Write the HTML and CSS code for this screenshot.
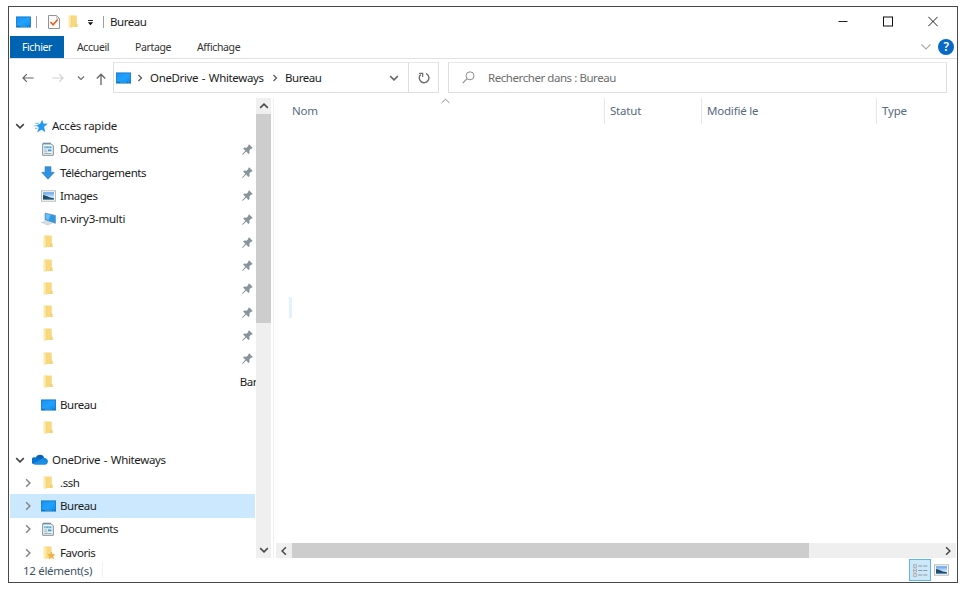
FILE: index.html
```html
<!DOCTYPE html>
<html lang="fr">
<head>
  <meta charset="UTF-8" />
  <title>Bureau</title>
  <link rel="stylesheet" href="styles.css">
</head>
<body>
  <svg class="sprite" aria-hidden="true">
    <defs>
      <linearGradient id="blueScreen" x1="0" y1="0" x2="1" y2="1">
        <stop offset="0" stop-color="#1590f5" />
        <stop offset="0.5" stop-color="#22a2ff" />
        <stop offset="1" stop-color="#0b8cf0" />
      </linearGradient>
      <linearGradient id="photoSky" x1="0" y1="0" x2="0" y2="1">
        <stop offset="0" stop-color="#5b9fea" />
        <stop offset="0.7" stop-color="#d8ecfb" />
      </linearGradient>
    </defs>
    <symbol id="desktop" viewBox="0 0 15 12">
      <rect x="0.4" y="0.9" width="14.2" height="10.2" fill="url(#blueScreen)" stroke="#1373bd" stroke-width="0.8" />
      <path d="M1 9.8h13v1H1z" fill="#096ab5" />
      <path d="M4 10.3h7M12 10.3h1" stroke="#55bdfb" stroke-width="0.6" />
    </symbol>
    <symbol id="folder" viewBox="0 0 10 14">
      <path d="M1 0.5h7.8v8l0.7 1v2.6H1z" fill="#f8d982" />
      <path d="M8.8 8.4l0.7 1.1v2.6H7V9z" fill="#f4d274" />
      <path d="M0.5 0.7l2.6 1v11.6L0.5 12.2z" fill="#fdeaa9" />
      <path d="M3.3 2v10.4" stroke="#efcf72" stroke-width="0.6" />
    </symbol>
    <symbol id="doc" viewBox="0 0 12 14">
      <path d="M0.7 1.7h8l2.6 2v9.6H0.7z" fill="#f6f9fb" stroke="#7f8b93" stroke-width="1" />
      <path d="M2 0.5v2M4 0.5v2M6 0.5v2M8 0.5v2" stroke="#4c7fa2" stroke-width="1" />
      <path d="M2.2 4.3h7.3v2H2.2z" fill="#57a8d6" />
      <path d="M4 4.3v2M7 4.3v2" stroke="#d3e9f5" stroke-width="0.6" />
      <path d="M6 7.4h3.5v2H6z" fill="#4a9acb" />
      <path d="M2.2 8h3.2M2.2 9.8h3.2M2.2 11.5h7.4" stroke="#8ba6b8" stroke-width="0.9" />
    </symbol>
    <symbol id="download" viewBox="0 0 14 14">
      <path d="M4 0.7h6v5.6h3.3L7 13.3 0.7 6.3H4z" fill="#3291e0" stroke="#2980cb" stroke-width="0.6" />
    </symbol>
    <symbol id="photo" viewBox="0 0 15 12">
      <rect x="0.5" y="0.8" width="14" height="10.4" fill="#fafafa" stroke="#b4b4b4" stroke-width="0.9" />
      <rect x="2" y="2.2" width="11" height="7.6" fill="url(#photoSky)" />
      <path d="M2 5c3 .2 5 2.4 11 3.2v1.6H2z" fill="#244964" />
      <path d="M2 8.9h11v.9H2z" fill="#5796c4" />
    </symbol>
    <symbol id="netpc" viewBox="0 0 15 14">
      <path d="M4 1.2l10.4 2.2v7.9L4 7.8z" fill="#2c9ae5" stroke="#5f8aa9" stroke-width="0.7" />
      <path d="M4.5 1.8l5 1.1-2 5.1-3-1z" fill="#6ac0f6" />
      <path d="M0.4 10.4l4.2-1.7 6.8 2.3-4.5 2.1z" fill="#d7dee3" stroke="#b8c2c8" stroke-width="0.5" />
    </symbol>
    <symbol id="star" viewBox="0 0 14 14">
      <path d="M8.2 0.7l1.1 3.8 4.6.2-3.8 3.1 1.1 5.1-3.7-2.2-4.4 2.9 1.7-4.9L2.6 6.3l3.5-1.5z" fill="#2499ee" />
      <path d="M1.4 4.3h3.5M0.3 6.8h3.1M1 9.3h2.3" stroke="#62b6f4" stroke-width="1" />
    </symbol>
    <symbol id="cloud" viewBox="0 0 16 11">
      <path d="M3.6 3.6A4.6 4.6 0 0 1 12.2 4L9 7.5z" fill="#0a5fb6" />
      <path d="M3.6 3.4c2.2-.5 3.6.5 6 2L5 9.9l-3.7.1A3.5 3.5 0 0 1 3.6 3.4z" fill="#0873ce" />
      <path d="M9 5.4c1.2-1.5 2.4-1.8 3.5-1.4a3.4 3.4 0 0 1 3.2 4.6L10 8.5z" fill="#1688dc" />
      <path d="M1.1 9.4L9.3 5.2l6.5 3.4a2.7 2.7 0 0 1-2.5 2.1H3.8a3.2 3.2 0 0 1-2.7-1.3z" fill="#1c8fe4" />
    </symbol>
    <symbol id="pin" viewBox="0 0 10 10">
      <path d="M6.4.2l3.4 3.4-1.1.8-.6-.1-1.4 1.6.2 2.2-1 .9-2.1-2.1L.6 9.9.1 9.4l3-3.2L1 4.1l1-.9 2.2.2L5.7 1.9v-.8z" fill="#87949c" />
    </symbol>
    <symbol id="favorites" viewBox="0 0 13 14">
      <path d="M1 0.5h7.6v12H1z" fill="#f8d982" />
      <path d="M0.5 0.7l2.8 1.1v11.6L0.5 12.2z" fill="#fdeaa9" />
      <path d="M8.3 5.3l1.2 2.6 3 .3-2.2 2 .7 3.1-2.7-1.5-2.7 1.5.7-3.1-2.2-2 3-.3z" fill="#eeb24c" />
    </symbol>
    <symbol id="down" viewBox="0 0 10 10">
      <path d="M1.2 3.1L5 6.9l3.8-3.8" fill="none" stroke="currentColor" stroke-width="1.5" />
    </symbol>
    <symbol id="up" viewBox="0 0 10 10">
      <path d="M1.2 6.9L5 3.1l3.8 3.8" fill="none" stroke="currentColor" stroke-width="1.5" />
    </symbol>
    <symbol id="right" viewBox="0 0 10 10">
      <path d="M3.1 1.2L6.9 5 3.1 8.8" fill="none" stroke="currentColor" stroke-width="1.5" />
    </symbol>
    <symbol id="left" viewBox="0 0 10 10">
      <path d="M6.9 1.2L3.1 5l3.8 3.8" fill="none" stroke="currentColor" stroke-width="1.5" />
    </symbol>
  </svg>

  <div class="window">
    <header class="titlebar">
      <svg class="title-icon" width="15" height="12"><use href="#desktop" /></svg>
      <span class="divider"></span>
      <svg class="check-icon" width="12" height="14" viewBox="0 0 12 14">
        <path d="M0.5 0.5h8l3 3v10h-11z" fill="#fbfbfb" stroke="#949494" />
        <path d="M8.5 0.5v3h3" fill="none" stroke="#b5b5b5" stroke-width="0.7" />
        <path d="M2.5 7l2.6 2.8 4.6-5.3" fill="none" stroke="#e8601f" stroke-width="1.6" />
      </svg>
      <svg class="title-folder" width="10" height="14"><use href="#folder" /></svg>
      <svg class="customize" width="7" height="6" viewBox="0 0 7 6">
        <path d="M1 0.5h5" stroke="#222" />
        <path d="M0.8 2.3h5.4L3.5 5.2z" fill="#111" />
      </svg>
      <span class="divider"></span>
      <span class="title">Bureau</span>
      <div class="window-buttons">
        <svg width="10" height="11" viewBox="0 0 10 11"><path d="M0.5 5.5h9" stroke="#222" /></svg>
        <svg width="10" height="11" viewBox="0 0 10 11"><rect x="0.5" y="1" width="9" height="9" fill="none" stroke="#111" /></svg>
        <svg width="10" height="11" viewBox="0 0 10 11"><path d="M0.3 0.8l9.4 9.4M9.7 0.8L0.3 10.2" stroke="#222" /></svg>
      </div>
    </header>

    <nav class="ribbon">
      <span class="tab file">Fichier</span>
      <span class="tab home">Accueil</span>
      <span class="tab share">Partage</span>
      <span class="tab view">Affichage</span>
      <svg class="expand" width="10" height="10" viewBox="0 0 10 10"><path d="M0.5 2.5L5 7l4.5-4.5" fill="none" stroke="#aaa" stroke-width="1.1" /></svg>
      <span class="help">?</span>
    </nav>

    <div class="toolbar">
      <div class="arrows">
        <svg width="12" height="10" viewBox="0 0 12 10"><path d="M11.7 5H1M4.8 1.2L1 5l3.8 3.8" fill="none" stroke="#666" stroke-width="1.2" /></svg>
        <svg class="forward" width="12" height="10" viewBox="0 0 12 10"><path d="M0.3 5H11M7.2 1.2L11 5 7.2 8.8" fill="none" stroke="#d2d2d2" stroke-width="1.2" /></svg>
        <svg class="recent" width="8" height="8"><use href="#down" /></svg>
        <svg class="parent" width="10" height="12" viewBox="0 0 10 12"><path d="M5 12V1.2M0.8 5.5L5 1.2l4.2 4.3" fill="none" stroke="#666" stroke-width="1.3" /></svg>
      </div>
      <div class="address">
        <svg width="15" height="12"><use href="#desktop" /></svg>
        <svg class="crumb-arrow" width="8" height="8"><use href="#right" /></svg>
        <span class="crumb onedrive">OneDrive - Whiteways</span>
        <svg class="crumb-arrow" width="8" height="8"><use href="#right" /></svg>
        <span class="crumb">Bureau</span>
        <svg class="history" width="10" height="10"><use href="#down" /></svg>
        <div class="refresh">
          <svg width="12" height="12" viewBox="0 0 12 12">
            <path d="M8.2 1.6A4.8 4.8 0 1 1 2.7 2.5" fill="none" stroke="#6b6b6b" stroke-width="1.4" />
            <path d="M1.1 1.4h3.6V5" fill="none" stroke="#6b6b6b" stroke-width="1.2" />
          </svg>
        </div>
      </div>
      <div class="search">
        <svg width="13" height="13" viewBox="0 0 13 13">
          <circle cx="8" cy="4.8" r="4" fill="none" stroke="#8d8d8d" />
          <path d="M5.1 7.7L0.7 12.2" stroke="#8d8d8d" stroke-width="1.1" />
        </svg>
        <span>Rechercher dans : Bureau</span>
      </div>
    </div>

    <div class="content">
      <aside class="tree">
        <div class="row root">
          <svg class="chevron open" width="10" height="10"><use href="#down" /></svg>
          <svg class="icon" width="14" height="14"><use href="#star" /></svg>
          <span class="quick">Accès rapide</span>
        </div>
        <div class="row">
          <svg class="icon" width="12" height="14"><use href="#doc" /></svg>
          <span>Documents</span>
          <svg class="pin" width="11" height="11"><use href="#pin" /></svg>
        </div>
        <div class="row">
          <svg class="icon" width="14" height="14"><use href="#download" /></svg>
          <span>Téléchargements</span>
          <svg class="pin" width="11" height="11"><use href="#pin" /></svg>
        </div>
        <div class="row">
          <svg class="icon" width="15" height="12"><use href="#photo" /></svg>
          <span>Images</span>
          <svg class="pin" width="11" height="11"><use href="#pin" /></svg>
        </div>
        <div class="row">
          <svg class="icon" width="15" height="14"><use href="#netpc" /></svg>
          <span class="network">n-viry3-multi</span>
          <svg class="pin" width="11" height="11"><use href="#pin" /></svg>
        </div>
        <div class="row"><svg class="icon" width="10" height="14"><use href="#folder" /></svg><svg class="pin" width="11" height="11"><use href="#pin" /></svg></div>
        <div class="row"><svg class="icon" width="10" height="14"><use href="#folder" /></svg><svg class="pin" width="11" height="11"><use href="#pin" /></svg></div>
        <div class="row"><svg class="icon" width="10" height="14"><use href="#folder" /></svg><svg class="pin" width="11" height="11"><use href="#pin" /></svg></div>
        <div class="row"><svg class="icon" width="10" height="14"><use href="#folder" /></svg><svg class="pin" width="11" height="11"><use href="#pin" /></svg></div>
        <div class="row"><svg class="icon" width="10" height="14"><use href="#folder" /></svg><svg class="pin" width="11" height="11"><use href="#pin" /></svg></div>
        <div class="row"><svg class="icon" width="10" height="14"><use href="#folder" /></svg><svg class="pin" width="11" height="11"><use href="#pin" /></svg></div>
        <div class="row"><svg class="icon" width="10" height="14"><use href="#folder" /></svg><span class="cut">Bar</span></div>
        <div class="row">
          <svg class="icon" width="15" height="12"><use href="#desktop" /></svg>
          <span>Bureau</span>
        </div>
        <div class="row"><svg class="icon" width="10" height="14"><use href="#folder" /></svg></div>

        <div class="row root second">
          <svg class="chevron open" width="10" height="10"><use href="#down" /></svg>
          <svg class="icon" width="16" height="11"><use href="#cloud" /></svg>
          <span class="onedrive">OneDrive - Whiteways</span>
        </div>
        <div class="row">
          <svg class="chevron" width="10" height="10"><use href="#right" /></svg>
          <svg class="icon" width="10" height="14"><use href="#folder" /></svg>
          <span>.ssh</span>
        </div>
        <div class="row selected">
          <svg class="chevron" width="10" height="10"><use href="#right" /></svg>
          <svg class="icon" width="15" height="12"><use href="#desktop" /></svg>
          <span>Bureau</span>
        </div>
        <div class="row">
          <svg class="chevron" width="10" height="10"><use href="#right" /></svg>
          <svg class="icon" width="12" height="14"><use href="#doc" /></svg>
          <span>Documents</span>
        </div>
        <div class="row">
          <svg class="chevron" width="10" height="10"><use href="#right" /></svg>
          <svg class="icon" width="13" height="14"><use href="#favorites" /></svg>
          <span>Favoris</span>
        </div>
      </aside>
      <div class="vscroll">
        <svg width="10" height="10"><use href="#up" /></svg>
        <div class="thumb"></div>
        <svg class="end" width="10" height="10"><use href="#down" /></svg>
      </div>

      <main class="files">
        <div class="columns">
          <span class="col name">Nom</span>
          <span class="col status">Statut</span>
          <span class="col modified">Modifié le</span>
          <span class="col type">Type</span>
          <svg class="sort" width="9" height="6" viewBox="0 0 9 6"><path d="M0.6 4.9L4.5 1.2l3.9 3.7" fill="none" stroke="#8a8a8a" /></svg>
        </div>
        <div class="list"><div class="item-edge"></div></div>
        <div class="hscroll">
          <svg width="10" height="10"><use href="#left" /></svg>
          <div class="thumb"></div>
          <svg class="end" width="10" height="10"><use href="#right" /></svg>
        </div>
      </main>
    </div>

    <footer class="status-bar">
      <span class="count">12 élément(s)</span>
      <span class="status-divider"></span>
      <div class="view-button active">
        <svg width="15" height="13" viewBox="0 0 15 13">
          <path d="M0.5 0.5h3v3h-3zM0.5 5h3v3h-3zM0.5 9.5h3v3h-3z" fill="#fff" stroke="#a0a8b0" stroke-width="0.8" />
          <path d="M1.4 2h1.2" stroke="#4775bd" />
          <path d="M1.4 6.5h1.2M1.4 11h1.2" stroke="#c46a38" />
          <path d="M5.3 2h4M10.3 2h4M5.3 6.5h4M10.3 6.5h4M5.3 11h4M10.3 11h4" stroke="#8799a5" />
        </svg>
      </div>
      <div class="view-button">
        <svg width="15" height="12"><use href="#photo" /></svg>
      </div>
    </footer>
  </div>
</body>
</html>
```
FILE: styles.css
```css
* {
  box-sizing: border-box;
}
body {
  margin: 0;
  padding: 6px 0 0 8px;
  font-family: 'Noto Sans', 'Open Sans', sans-serif;
  font-size: 11.5px;
  letter-spacing: -0.45px;
  color: #1c1c1c;
  background: #fff;
}
svg {
  display: block;
  flex: none;
}
span {
  white-space: nowrap;
}
.sprite {
  position: absolute;
  width: 0;
  height: 0;
}
.window {
  display: flex;
  flex-direction: column;
  width: 950px;
  height: 577px;
  border: 1px solid #48484b;
}

/* title bar */
.titlebar {
  display: flex;
  align-items: center;
  height: 29px;
  padding: 0 19px 0 7px;
}
.divider {
  width: 1px;
  height: 12px;
  background: #a0a0a0;
}
.title-icon {
  margin-right: 5px;
}
.check-icon {
  margin-left: 11px;
}
.title-folder {
  margin-left: 8px;
}
.customize {
  margin: 2px 9px 0 9px;
}
.title {
  margin-left: 6px;
}
.window-buttons {
  display: flex;
  gap: 35px;
  margin-left: auto;
}

/* ribbon */
.ribbon {
  display: flex;
  align-items: center;
  height: 23px;
  border-bottom: 1px solid #e1e1e1;
  font-size: 10.5px;
  letter-spacing: -0.35px;
  color: #333;
}
.tab {
  line-height: 22px;
}
.file {
  width: 54px;
  margin-left: 1px;
  text-align: center;
  color: #fff;
  background: #0063b1;
}
.home {
  margin-left: 13px;
  width: 58px;
}
.share {
  width: 62px;
}
.expand {
  margin-left: auto;
}
.help {
  width: 16px;
  height: 16px;
  margin: 0 3px 0 7px;
  border-radius: 50%;
  background: #0869c6;
  color: #fff;
  font-size: 12px;
  font-weight: 600;
  line-height: 16px;
  text-align: center;
}

/* navigation and address */
.toolbar {
  display: flex;
  height: 39px;
  padding: 3px 10px 5px 0;
}
.arrows {
  display: flex;
  align-items: center;
  width: 104px;
  padding-left: 13px;
  color: #6e6e6e;
}
.forward {
  margin-left: 18px;
}
.recent {
  margin-left: 13px;
}
.parent {
  margin: 2px 0 0 11px;
}
.address,
.search {
  display: flex;
  align-items: center;
  border: 1px solid #dedede;
  border-top-color: #e8e8e8;
}
.address {
  width: 326px;
  padding-left: 2px;
}
.crumb-arrow {
  margin: 0 6px 0 5px;
  color: #555;
}
.onedrive {
  width: 115px;
  letter-spacing: -0.35px;
  word-spacing: 1px;
}
.onedrive + .crumb-arrow {
  margin: 0 6px 0 6px;
}
.history {
  margin-left: auto;
  margin-right: 9px;
  color: #666;
}
.refresh {
  display: flex;
  align-items: center;
  justify-content: center;
  width: 30px;
  height: 100%;
  border-left: 1px solid #dedede;
}
.search {
  flex: 1;
  margin-left: 9px;
  padding-left: 13px;
  gap: 13px;
  letter-spacing: -0.44px;
  color: #6d6d6d;
}

/* folder tree */
.content {
  display: flex;
  height: 460px;
}
.tree {
  width: 247px;
  padding: 16.4px 1px 0;
  overflow-x: clip;
}
.row {
  display: flex;
  align-items: center;
  height: 23.25px;
  padding-left: 31px;
}
.row.root {
  padding-left: 5px;
}
.row.second {
  margin-top: 8px;
}
.row.selected {
  background: #cce8ff;
}
.row span {
  margin-top: -0.6px;
}
.icon {
  margin-right: 4px;
}
.icon[width="10"] {
  margin-left: 2px;
  margin-right: 7px;
}
.icon[width="12"] {
  margin-left: 1px;
  margin-right: 6px;
}
.icon[width="14"] {
  margin-right: 5px;
}
.icon[width="13"] {
  margin-left: 2px;
  margin-right: 4px;
}
.chevron {
  margin-left: -18px;
  margin-right: 8px;
  color: #868686;
}
.chevron.open {
  margin-left: 0;
  margin-right: 7px;
  color: #404040;
}
.root .icon[width="14"] {
  margin: 0 4px 0 2px;
}
.root .icon[width="16"] {
  margin-right: 4px;
}
.network,
.quick {
  letter-spacing: -0.25px;
}
.pin {
  margin-left: auto;
  margin-right: 2px;
}
.row .cut {
  margin-left: auto;
  margin-right: -2px;
}

/* scrollbars */
.vscroll,
.hscroll {
  display: flex;
  align-items: center;
  background: #efefef;
  color: #484848;
}
.vscroll {
  flex-direction: column;
  width: 15px;
  padding: 3px 0;
}
.vscroll .thumb {
  width: 15px;
  height: 209px;
  margin-top: 3px;
  background: #cdcdcd;
}
.vscroll .end {
  margin-top: auto;
}
.hscroll {
  height: 15px;
  margin-left: 2px;
  padding: 0 3px;
}
.hscroll .thumb {
  width: 517px;
  height: 15px;
  margin-left: 3px;
  background: #cdcdcd;
}
.hscroll .end {
  margin-left: auto;
}

/* file list */
.files {
  display: flex;
  flex: 1;
  flex-direction: column;
  margin-left: 2px;
  margin-right: 1px;
  border-left: 1px solid #f0f0f0;
}
.columns {
  position: relative;
  display: flex;
  height: 26px;
  line-height: 26px;
  letter-spacing: -0.2px;
  color: #566a80;
}
.col {
  padding-left: 6px;
}
.col + .col {
  border-left: 1px solid #e7e7e7;
  padding-left: 5px;
}
.name {
  width: 330px;
  padding-left: 18px;
}
.status {
  width: 97px;
}
.modified {
  width: 175px;
}
.sort {
  position: absolute;
  left: 167px;
  top: 0;
}
.list {
  flex: 1;
  padding: 173px 0 0 15px;
}
.item-edge {
  width: 3px;
  height: 21px;
  background: #e3f2fd;
}

/* status bar */
.status-bar {
  display: flex;
  align-items: center;
  height: 24px;
  padding: 0 5px 0 14px;
  color: #3e5368;
}
.count {
  letter-spacing: -0.3px;
}
.status-divider {
  width: 1px;
  height: 16px;
  margin-left: 10px;
  margin-right: auto;
  background: #f1f1f1;
}
.view-button {
  display: flex;
  align-items: center;
  justify-content: center;
  width: 21px;
  height: 22px;
}
.view-button.active {
  width: 22px;
  border: 1px solid #5fb5e3;
  background: #cce8f8;
}
```
